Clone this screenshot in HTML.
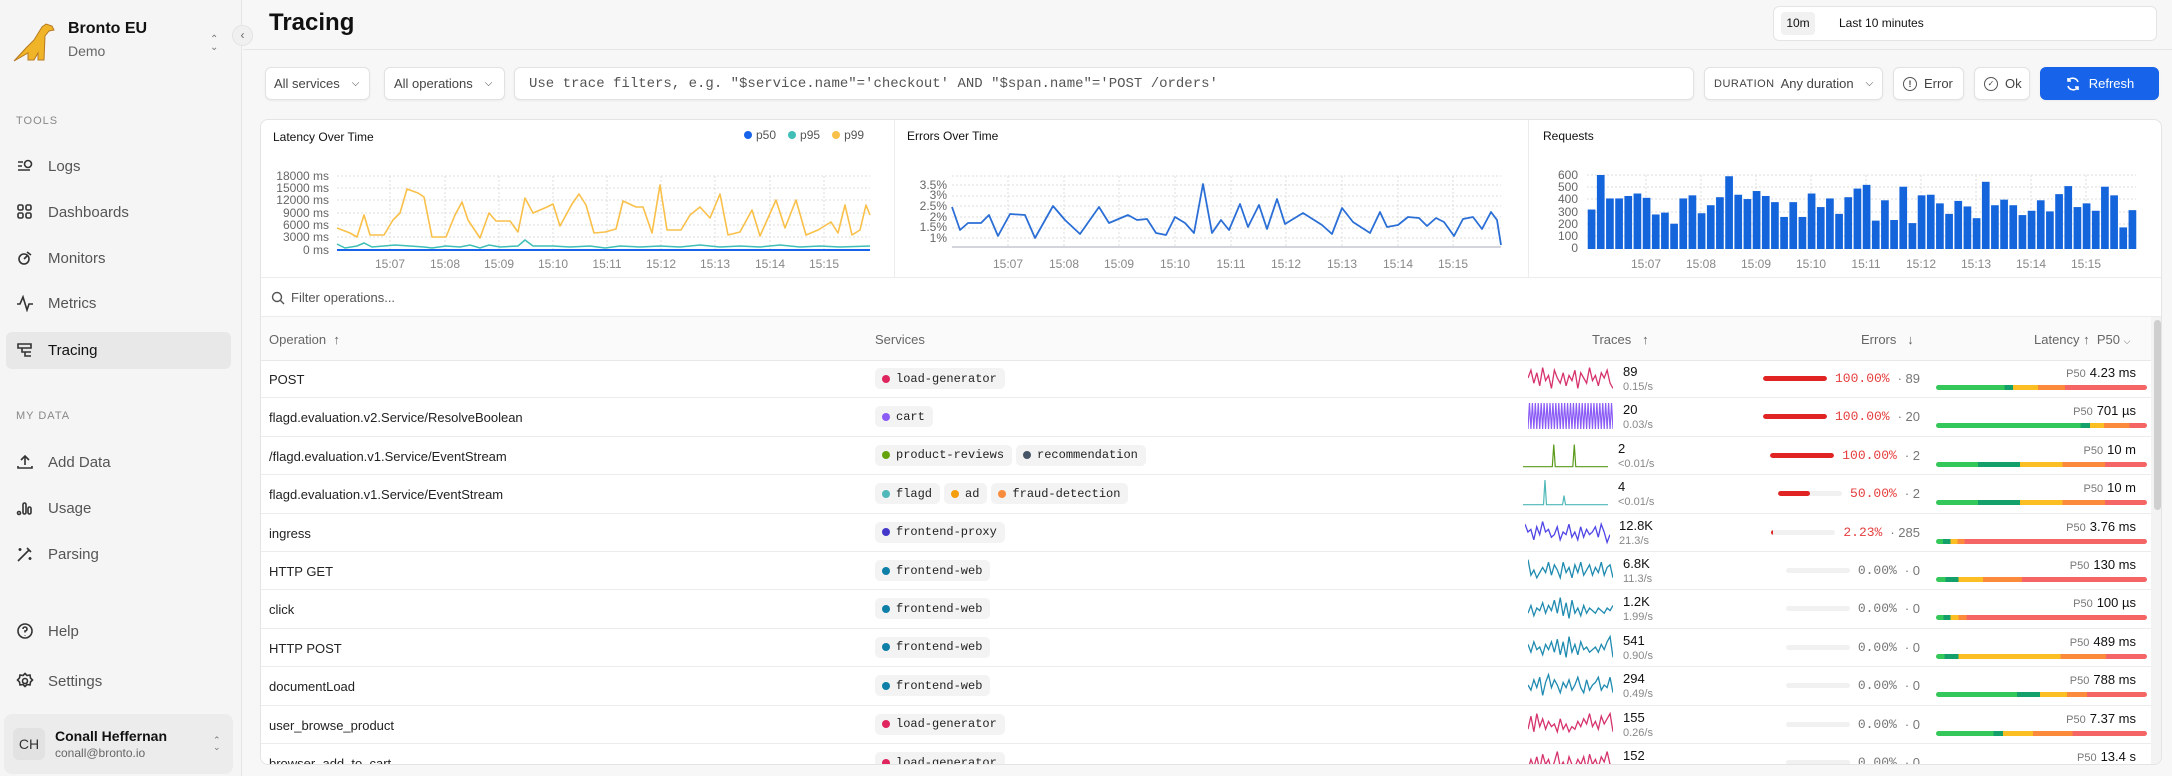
<!DOCTYPE html>
<html><head><meta charset="utf-8"><style>
*{box-sizing:border-box;margin:0;padding:0}
body{width:2172px;height:776px;overflow:hidden;background:#f7f7f7;font-family:"Liberation Sans",Arial,sans-serif;color:#1a1a1a;position:relative}
.a{position:absolute}
.side{left:0;top:0;width:242px;height:776px;background:#f5f5f5;border-right:1px solid #e6e6e6}
.nav{left:16px;font-size:15px;color:#555;display:flex;align-items:center;gap:14px}
.nav svg{width:18px;height:18px;stroke:#333;fill:none;stroke-width:1.6}
.sec{left:16px;font-size:11px;letter-spacing:1px;color:#888}
.btn{background:#fff;border:1px solid #e2e2e2;border-radius:6px;box-shadow:0 1px 2px rgba(0,0,0,.05);font-size:13px;color:#444;display:flex;align-items:center;height:33px;top:67px}
.mono{font-family:"Liberation Mono",monospace}
.card{left:260px;top:119px;width:1902px;height:646px;background:#fff;border:1px solid #e4e4e4;border-radius:8px;overflow:hidden}
.ct{font-size:12px;color:#111}
.th{font-size:13px;color:#666}
.row{left:0;width:1890px;height:38.4px;border-bottom:1px solid #ececec}
.op{left:8px;top:12px;font-size:13px;color:#222}
.chips{left:614px;top:8px;display:flex;gap:4px}
.chip{background:#f3f3f3;border-radius:5px;height:21px;padding:0 8px 0 7px;display:flex;align-items:center;gap:6px;font-family:"Liberation Mono",monospace;font-size:12px;color:#222}
.chip i{width:8px;height:8px;border-radius:50%;display:inline-block}
.sp{left:1267px;top:5px;width:85px;height:26px}
.cnt{left:1362px;top:4px;font-size:13px;color:#111}
.rate{left:1362px;top:21px;font-size:11px;color:#888}
.err{right:231px;top:11px;display:flex;align-items:center;gap:8px;font-size:13px;color:#777}
.trk{width:64px;height:5px;border-radius:3px;background:#f1f1f1;position:relative;overflow:hidden}
.trk b{position:absolute;right:0;top:0;bottom:0;background:#e02424;border-radius:3px}
.pct{font-family:"Liberation Mono",monospace}
.lat{right:15px;top:5px;font-size:13px;color:#111}
.lat small{font-size:11px;color:#777;margin-right:4px}
.lb{left:1675px;top:25px;width:211px;height:5px;border-radius:3px}
</style></head><body>
<div class="a side"></div>
<svg class="a" style="left:12px;top:22px" width="48" height="40" viewBox="0 0 48 40"><path d="M2 39 L14 26 L22 18 L30 5 L34 2 L40 4 L42 8 L37 9 L33 14 L32 38 L26 38 L26 31 L22 38 L16 38 L16 31 Z" fill="#f0b429" stroke="#b7791f" stroke-width="1"/></svg>
<div class="a" style="left:68px;top:20px;font-size:16px;font-weight:bold;color:#111">Bronto EU</div>
<div class="a" style="left:68px;top:43px;font-size:14px;color:#666">Demo</div>
<div class="a" style="left:210px;top:36px;font-size:10px;color:#777;line-height:8px">⌃<br>⌄</div>
<div class="a" style="left:232px;top:25px;width:21px;height:21px;border-radius:50%;background:#f0f0f0;border:1px solid #e3e3e3;font-size:12px;color:#666;text-align:center;line-height:19px">‹</div>
<div class="a sec" style="top:115px">TOOLS</div>
<div class="a nav" style="top:157px"><svg viewBox="0 0 18 18"><path d="M2 5h5M2 9h4M2 13h12"/><circle cx="12" cy="7" r="3.5"/></svg>Logs</div>
<div class="a nav" style="top:203px"><svg viewBox="0 0 18 18"><rect x="2" y="2" width="5" height="5" rx="1.5"/><rect x="10" y="2" width="5" height="5" rx="1.5"/><rect x="2" y="10" width="5" height="5" rx="1.5"/><rect x="10" y="10" width="5" height="5" rx="1.5"/></svg>Dashboards</div>
<div class="a nav" style="top:249px"><svg viewBox="0 0 18 18"><circle cx="8" cy="10" r="5"/><path d="M11 3l4 3M8 10l3-3"/></svg>Monitors</div>
<div class="a nav" style="top:294px"><svg viewBox="0 0 18 18"><path d="M1 10h3l3-7 4 13 2-6h4"/></svg>Metrics</div>
<div class="a" style="left:6px;top:332px;width:225px;height:37px;background:#e8e8e8;border-radius:6px"></div>
<div class="a nav" style="top:341px;color:#111"><svg viewBox="0 0 18 18"><path d="M2 3h13v4H2zM6 7v4h9M9 11v4h6"/></svg>Tracing</div>
<div class="a sec" style="top:410px">MY DATA</div>
<div class="a nav" style="top:453px"><svg viewBox="0 0 18 18"><path d="M9 12V3M5 7l4-4 4 4M2 13v2h14v-2"/></svg>Add Data</div>
<div class="a nav" style="top:499px"><svg viewBox="0 0 18 18"><circle cx="3" cy="14" r="1.5"/><rect x="7" y="4" width="3" height="11" rx="1.5"/><rect x="12" y="8" width="3" height="7" rx="1.5"/></svg>Usage</div>
<div class="a nav" style="top:545px"><svg viewBox="0 0 18 18"><path d="M2 16L13 5M11 3l4 4M4 3v3M2.5 4.5h3M14 12v3M12.5 13.5h3"/></svg>Parsing</div>
<div class="a nav" style="top:622px"><svg viewBox="0 0 18 18"><circle cx="9" cy="9" r="7"/><path d="M7 7a2 2 0 1 1 2 2v1.5M9 13v.5"/></svg>Help</div>
<div class="a nav" style="top:672px"><svg viewBox="0 0 18 18"><circle cx="9" cy="9" r="2.5"/><path d="M9 1.5l2 2 3-.5.5 3 2 2-2 2-.5 3-3-.5-2 2-2-2-3 .5-.5-3-2-2 2-2 .5-3 3 .5z"/></svg>Settings</div>
<div class="a" style="left:4px;top:714px;width:229px;height:60px;background:#ececec;border-radius:8px"></div>
<div class="a" style="left:13px;top:728px;width:32px;height:32px;border-radius:6px;background:#e2e2e2;font-size:14px;color:#333;text-align:center;line-height:32px">CH</div>
<div class="a" style="left:55px;top:728px;font-size:14px;font-weight:bold;color:#111">Conall Heffernan</div>
<div class="a" style="left:55px;top:746px;font-size:12px;color:#666">conall@bronto.io</div>
<div class="a" style="left:213px;top:737px;font-size:9px;color:#777;line-height:7px">⌃<br>⌄</div>

<div class="a" style="left:269px;top:9px;font-size:24px;font-weight:bold;color:#111">Tracing</div>
<div class="a" style="left:243px;top:49px;width:1929px;height:1px;background:#e6e6e6"></div>
<div class="a" style="left:1773px;top:6px;width:384px;height:35px;background:#fff;border:1px solid #e4e4e4;border-radius:6px"></div>
<div class="a" style="left:1781px;top:12px;width:34px;height:23px;background:#f1f1f1;border-radius:4px;font-size:12px;text-align:center;line-height:23px;color:#111">10m</div>
<div class="a" style="left:1839px;top:16px;font-size:12px;color:#111">Last 10 minutes</div>

<div class="a btn" style="left:265px;width:105px;padding-left:8px">All services <span style="margin-left:12px;font-size:10px">⌵</span></div>
<div class="a btn" style="left:384px;width:121px;padding-left:9px">All operations <span style="margin-left:12px;font-size:10px">⌵</span></div>
<div class="a btn mono" style="left:514px;width:1180px;padding-left:14px;font-size:14px;color:#555">Use trace filters, e.g. "$service.name"='checkout' AND "$span.name"='POST /orders'</div>
<div class="a btn" style="left:1704px;width:179px;padding-left:9px"><span style="font-size:11px;letter-spacing:.5px;color:#444;margin-right:6px">DURATION</span>Any duration<span style="margin-left:12px;font-size:10px">⌵</span></div>
<div class="a btn" style="left:1893px;width:71px;padding-left:9px"><span style="display:inline-block;width:14px;height:14px;border:1.4px solid #555;border-radius:50%;font-size:9px;text-align:center;line-height:12px;margin-right:7px;font-weight:bold">!</span>Error</div>
<div class="a btn" style="left:1974px;width:56px;padding-left:9px"><span style="display:inline-block;width:14px;height:14px;border:1.4px solid #555;border-radius:50%;font-size:8px;text-align:center;line-height:12px;margin-right:7px">✓</span>Ok</div>
<div class="a btn" style="left:2040px;width:119px;background:#1763ea;border-color:#1763ea;color:#fff;justify-content:center;gap:8px;font-size:13px"><svg width="16" height="16" viewBox="0 0 16 16" fill="none" stroke="#fff" stroke-width="1.6"><path d="M13 6A5.5 5.5 0 0 0 3 5M3 2v3h3M3 10a5.5 5.5 0 0 0 10 1M13 14v-3h-3"/></svg>Refresh</div>

<div class="a card">
 <div class="a" style="left:633px;top:0;width:1px;height:158px;background:#ececec"></div>
 <div class="a" style="left:1267px;top:0;width:1px;height:158px;background:#ececec"></div>
 <div class="a" style="left:0;top:157px;width:1902px;height:1px;background:#ececec"></div>
 <div class="a ct" style="left:12px;top:10px">Latency Over Time</div>
 <div class="a ct" style="left:646px;top:9px">Errors Over Time</div>
 <div class="a ct" style="left:1282px;top:9px">Requests</div>
 <div class="a" style="left:483px;top:8px;font-size:12px;color:#555;display:flex;gap:12px;align-items:center">
  <span><i style="display:inline-block;width:8px;height:8px;border-radius:50%;background:#1763ea;margin-right:4px"></i>p50</span>
  <span><i style="display:inline-block;width:8px;height:8px;border-radius:50%;background:#3fbfb5;margin-right:4px"></i>p95</span>
  <span><i style="display:inline-block;width:8px;height:8px;border-radius:50%;background:#f9c04a;margin-right:4px"></i>p99</span>
 </div>
 <div class="a" style="left:0;top:158px;width:1902px;height:39px;border-bottom:1px solid #ececec"></div>
 <svg class="a" style="left:10px;top:171px" width="14" height="14" viewBox="0 0 14 14" fill="none" stroke="#555" stroke-width="1.4"><circle cx="6" cy="6" r="4.5"/><path d="M9.5 9.5l3.5 3.5"/></svg>
 <div class="a" style="left:30px;top:170px;font-size:13px;color:#555">Filter operations...</div>
 <div class="a" style="left:0;top:197px;width:1890px;height:44px;background:#fafafa;border-bottom:1px solid #e8e8e8"></div>
 <div class="a th" style="left:8px;top:212px">Operation&nbsp;&nbsp;↑</div>
 <div class="a th" style="left:614px;top:212px">Services</div>
 <div class="a th" style="left:1331px;top:212px">Traces&nbsp;&nbsp;&nbsp;↑</div>
 <div class="a th" style="left:1600px;top:212px">Errors&nbsp;&nbsp;&nbsp;↓</div>
 <div class="a th" style="left:1773px;top:212px">Latency&nbsp;↑&nbsp;&nbsp;P50 <span style="font-size:9px">⌵</span></div>
 <div class="a" style="left:1890px;top:197px;width:12px;height:449px;background:#f3f3f3"></div>
 <div class="a" style="left:1893px;top:200px;width:7px;height:190px;background:#cfcfcf;border-radius:4px"></div>
</div>

<svg class="a" style="left:0;top:0" width="2172" height="300">
 <g stroke="#ddd" stroke-dasharray="2 2" stroke-width="1">
  <path d="M337 176H870M337 188H870M337 200H870M337 213H870M337 225H870M337 237H870"/>
  <path d="M390 176V250M445 176V250M499 176V250M553 176V250M607 176V250M661 176V250M715 176V250M770 176V250M824 176V250"/>
  <path d="M952 176H1501M952 185H1501M952 196H1501M952 206H1501M952 217H1501M952 228H1501M952 238H1501"/>
  <path d="M1008 176V247M1064 176V247M1119 176V247M1175 176V247M1231 176V247M1286 176V247M1342 176V247M1398 176V247M1453 176V247"/>
  <path d="M1587 175H2136M1587 187H2136M1587 199H2136M1587 212H2136M1587 224H2136M1587 236H2136"/>
  <path d="M1646 175V248M1701 175V248M1756 175V248M1811 175V248M1866 175V248M1921 175V248M1976 175V248M2031 175V248M2086 175V248"/>
 </g>
 <g font-family="Liberation Sans,Arial,sans-serif" font-size="12" fill="#666" text-anchor="end">
  <text x="329" y="180">18000 ms</text><text x="329" y="192">15000 ms</text><text x="329" y="204">12000 ms</text><text x="329" y="217">9000 ms</text><text x="329" y="229">6000 ms</text><text x="329" y="241">3000 ms</text><text x="329" y="254">0 ms</text>
  <text x="947" y="189">3.5%</text><text x="947" y="199">3%</text><text x="947" y="210">2.5%</text><text x="947" y="221">2%</text><text x="947" y="231">1.5%</text><text x="947" y="242">1%</text>
  <text x="1578" y="179">600</text><text x="1578" y="191">500</text><text x="1578" y="203">400</text><text x="1578" y="216">300</text><text x="1578" y="228">200</text><text x="1578" y="240">100</text><text x="1578" y="252">0</text>
 </g>
 <g font-family="Liberation Sans,Arial,sans-serif" font-size="12" fill="#888" text-anchor="middle">
  <text x="390" y="268">15:07</text><text x="445" y="268">15:08</text><text x="499" y="268">15:09</text><text x="553" y="268">15:10</text><text x="607" y="268">15:11</text><text x="661" y="268">15:12</text><text x="715" y="268">15:13</text><text x="770" y="268">15:14</text><text x="824" y="268">15:15</text>
  <text x="1008" y="268">15:07</text><text x="1064" y="268">15:08</text><text x="1119" y="268">15:09</text><text x="1175" y="268">15:10</text><text x="1231" y="268">15:11</text><text x="1286" y="268">15:12</text><text x="1342" y="268">15:13</text><text x="1398" y="268">15:14</text><text x="1453" y="268">15:15</text>
  <text x="1646" y="268">15:07</text><text x="1701" y="268">15:08</text><text x="1756" y="268">15:09</text><text x="1811" y="268">15:10</text><text x="1866" y="268">15:11</text><text x="1921" y="268">15:12</text><text x="1976" y="268">15:13</text><text x="2031" y="268">15:14</text><text x="2086" y="268">15:15</text>
 </g>
 <path d="M337 250H870" stroke="#1763ea" stroke-width="2"/>
 <polyline fill="none" stroke="#3fbfb5" stroke-width="1.5" points="337,244 345,248 357,246 364,243 372,247 384,246 395,245 410,246 424,247 432,248 446,246 460,247 470,245 480,248 489,245 500,247 518,246 525,240 533,246 553,246 570,247 590,246 605,248 620,246 640,247 660,246 680,247 700,245 720,247 740,246 760,247 780,245 800,247 820,246 840,247 870,246"/>
 <polyline fill="none" stroke="#f9c04a" stroke-width="1.6" stroke-linejoin="round" points="337,228 350,233 357,237 364,215 370,235 384,235 393,220 400,213 407,189 418,193 424,197 432,237 446,237 455,215 462,202 468,220 480,238 489,213 496,221 510,221 518,232 525,198 533,213 547,207 553,204 560,226 572,204 579,194 586,205 594,233 605,232 616,229 623,201 636,207 643,207 652,233 660,185 667,230 681,230 690,215 700,207 710,218 720,194 728,235 740,232 752,210 760,236 776,200 785,228 796,200 806,235 818,230 831,222 838,233 845,205 852,235 860,230 866,205 870,215"/>
 <path d="M952 247H1501" stroke="#aab" stroke-width="1"/>
 <polyline fill="none" stroke="#2b6fd6" stroke-width="1.8" stroke-linejoin="round" points="952,207 960,230 968,223 981,223 989,215 998,236 1010,214 1025,215 1035,238 1053,206 1065,220 1080,234 1099,207 1109,223 1128,215 1137,220 1147,219 1156,233 1166,235 1175,217 1185,223 1194,233 1203,184 1212,233 1221,220 1229,230 1240,204 1248,227 1259,205 1267,229 1277,199 1285,224 1303,213 1322,225 1332,234 1342,208 1353,222 1370,233 1380,212 1387,227 1398,225 1408,217 1419,218 1427,226 1436,218 1444,222 1454,236 1463,219 1473,217 1482,229 1491,212 1497,220 1501,245"/>
</svg>
<svg class="a" style="left:1587px;top:175px" width="550" height="74" viewBox="0 0 60 600" preserveAspectRatio="none">
 <g fill="#1464dc">
 <rect x="0.08" y="280" width="0.84" height="320"/><rect x="1.08" y="0" width="0.84" height="600"/><rect x="2.08" y="190" width="0.84" height="410"/><rect x="3.08" y="190" width="0.84" height="410"/><rect x="4.08" y="170" width="0.84" height="430"/><rect x="5.08" y="150" width="0.84" height="450"/><rect x="6.08" y="185" width="0.84" height="415"/><rect x="7.08" y="320" width="0.84" height="280"/><rect x="8.08" y="305" width="0.84" height="295"/><rect x="9.08" y="395" width="0.84" height="205"/>
 <rect x="10.08" y="190" width="0.84" height="410"/><rect x="11.08" y="165" width="0.84" height="435"/><rect x="12.08" y="310" width="0.84" height="290"/><rect x="13.08" y="245" width="0.84" height="355"/><rect x="14.08" y="180" width="0.84" height="420"/><rect x="15.08" y="10" width="0.84" height="590"/><rect x="16.08" y="160" width="0.84" height="440"/><rect x="17.08" y="195" width="0.84" height="405"/><rect x="18.08" y="130" width="0.84" height="470"/><rect x="19.08" y="170" width="0.84" height="430"/>
 <rect x="20.08" y="220" width="0.84" height="380"/><rect x="21.08" y="340" width="0.84" height="260"/><rect x="22.08" y="220" width="0.84" height="380"/><rect x="23.08" y="340" width="0.84" height="260"/><rect x="24.08" y="150" width="0.84" height="450"/><rect x="25.08" y="260" width="0.84" height="340"/><rect x="26.08" y="190" width="0.84" height="410"/><rect x="27.08" y="315" width="0.84" height="285"/><rect x="28.08" y="180" width="0.84" height="420"/><rect x="29.08" y="110" width="0.84" height="490"/>
 <rect x="30.08" y="80" width="0.84" height="520"/><rect x="31.08" y="370" width="0.84" height="230"/><rect x="32.08" y="205" width="0.84" height="395"/><rect x="33.08" y="365" width="0.84" height="235"/><rect x="34.08" y="95" width="0.84" height="505"/><rect x="35.08" y="390" width="0.84" height="210"/><rect x="36.08" y="165" width="0.84" height="435"/><rect x="37.08" y="160" width="0.84" height="440"/><rect x="38.08" y="230" width="0.84" height="370"/><rect x="39.08" y="315" width="0.84" height="285"/>
 <rect x="40.08" y="210" width="0.84" height="390"/><rect x="41.08" y="255" width="0.84" height="345"/><rect x="42.08" y="350" width="0.84" height="250"/><rect x="43.08" y="55" width="0.84" height="545"/><rect x="44.08" y="245" width="0.84" height="355"/><rect x="45.08" y="200" width="0.84" height="400"/><rect x="46.08" y="245" width="0.84" height="355"/><rect x="47.08" y="325" width="0.84" height="275"/><rect x="48.08" y="290" width="0.84" height="310"/><rect x="49.08" y="205" width="0.84" height="395"/>
 <rect x="50.08" y="295" width="0.84" height="305"/><rect x="51.08" y="155" width="0.84" height="445"/><rect x="52.08" y="90" width="0.84" height="510"/><rect x="53.08" y="260" width="0.84" height="340"/><rect x="54.08" y="230" width="0.84" height="370"/><rect x="55.08" y="290" width="0.84" height="310"/><rect x="56.08" y="95" width="0.84" height="505"/><rect x="57.08" y="165" width="0.84" height="435"/><rect x="58.08" y="425" width="0.84" height="175"/><rect x="59.08" y="285" width="0.84" height="315"/>
 </g>
</svg>

<div class="a" style="left:261px;top:360px;width:1890px;height:404px;overflow:hidden">
<div class="a row" style="top:0"><div class="a op">POST</div><div class="a chips"><span class="chip"><i style="background:#e0245e"></i>load-generator</span></div>
<svg class="a sp" viewBox="0 0 29 10" preserveAspectRatio="none"><polyline fill="none" stroke="#d6336c" stroke-width="1.3" vector-effect="non-scaling-stroke" points="0,5 1,2 2,7 3,3 4,8 5,1 6,6 7,4 8,9 9,2 10,5 11,7 12,3 13,8 14,4 15,6 16,2 17,9 18,3 19,5 20,7 21,1 22,6 23,4 24,8 25,3 26,5 27,2 28,7 29,9"/></svg>
<div class="a cnt">89</div><div class="a rate">0.15/s</div>
<div class="a err"><div class="trk"><b style="width:100%"></b></div><span class="pct" style="color:#e53e3e">100.00%</span><span>· 89</span></div>
<div class="a lat"><small>P50</small>4.23 ms</div>
<div class="a lb" style="background:linear-gradient(90deg,#34c759 0 32.5%,#14a06a 32.5% 36.5%,#fbbf24 36.5% 48.4%,#fb8a3c 48.4% 61.2%,#f56565 61.2%)"></div></div>

<div class="a row" style="top:38.4px"><div class="a op">flagd.evaluation.v2.Service/ResolveBoolean</div><div class="a chips"><span class="chip"><i style="background:#8b5cf6"></i>cart</span></div>
<svg class="a sp" viewBox="0 0 29 10" preserveAspectRatio="none"><polyline fill="none" stroke="#8b5cf6" stroke-width="1.2" vector-effect="non-scaling-stroke" points="0,10 0.5,0 1,10 1.5,0 2,10 2.5,0 3,10 3.5,0 4,10 4.5,0 5,10 5.5,0 6,10 6.5,0 7,10 7.5,0 8,10 8.5,0 9,10 9.5,0 10,10 10.5,0 11,10 11.5,0 12,10 12.5,0 13,10 13.5,0 14,10 14.5,0 15,10 15.5,0 16,10 16.5,0 17,10 17.5,0 18,10 18.5,0 19,10 19.5,0 20,10 20.5,0 21,10 21.5,0 22,10 22.5,0 23,10 23.5,0 24,10 24.5,0 25,10 25.5,0 26,10 26.5,0 27,10 27.5,0 28,10 28.5,0 29,10"/></svg>
<div class="a cnt">20</div><div class="a rate">0.03/s</div>
<div class="a err"><div class="trk"><b style="width:100%"></b></div><span class="pct" style="color:#e53e3e">100.00%</span><span>· 20</span></div>
<div class="a lat"><small>P50</small>701 µs</div>
<div class="a lb" style="background:linear-gradient(90deg,#34c759 0 68.5%,#14a06a 68.5% 73.1%,#fbbf24 73.1% 79.7%,#fb8a3c 79.7% 91.8%,#f56565 91.8%)"></div></div>

<div class="a row" style="top:76.8px"><div class="a op">/flagd.evaluation.v1.Service/EventStream</div><div class="a chips"><span class="chip"><i style="background:#65a30d"></i>product-reviews</span><span class="chip"><i style="background:#475569"></i>recommendation</span></div>
<svg class="a sp" style="left:1262px" viewBox="0 0 29 10" preserveAspectRatio="none"><polyline fill="none" stroke="#5a9a1a" stroke-width="1.2" vector-effect="non-scaling-stroke" points="0,9.5 10,9.5 10.5,1 11,9.5 17,9.5 17.5,1 18,9.5 29,9.5"/></svg>
<div class="a cnt" style="left:1357px">2</div><div class="a rate" style="left:1357px">&lt;0.01/s</div>
<div class="a err"><div class="trk"><b style="width:100%"></b></div><span class="pct" style="color:#e53e3e">100.00%</span><span>· 2</span></div>
<div class="a lat"><small>P50</small>10 m</div>
<div class="a lb" style="background:linear-gradient(90deg,#34c759 0 19.9%,#14a06a 19.9% 39.7%,#fbbf24 39.7% 60%,#fb8a3c 60% 80.1%,#f56565 80.1%)"></div></div>

<div class="a row" style="top:115.2px"><div class="a op">flagd.evaluation.v1.Service/EventStream</div><div class="a chips"><span class="chip"><i style="background:#4fb8b8"></i>flagd</span><span class="chip"><i style="background:#f59e0b"></i>ad</span><span class="chip"><i style="background:#fb8c3c"></i>fraud-detection</span></div>
<svg class="a sp" style="left:1262px" viewBox="0 0 29 10" preserveAspectRatio="none"><polyline fill="none" stroke="#4fb8b8" stroke-width="1.2" vector-effect="non-scaling-stroke" points="0,9.5 7,9.5 7.5,0 8,9.5 13.5,9.5 14,6 14.5,9.5 29,9.5"/></svg>
<div class="a cnt" style="left:1357px">4</div><div class="a rate" style="left:1357px">&lt;0.01/s</div>
<div class="a err"><div class="trk"><b style="width:50%;left:0;right:auto"></b></div><span class="pct" style="color:#e53e3e">50.00%</span><span>· 2</span></div>
<div class="a lat"><small>P50</small>10 m</div>
<div class="a lb" style="background:linear-gradient(90deg,#34c759 0 19.9%,#14a06a 19.9% 39.7%,#fbbf24 39.7% 60%,#fb8a3c 60% 80.1%,#f56565 80.1%)"></div></div>

<div class="a row" style="top:153.6px"><div class="a op">ingress</div><div class="a chips"><span class="chip"><i style="background:#4338ca"></i>frontend-proxy</span></div>
<svg class="a sp" style="left:1264px" viewBox="0 0 29 10" preserveAspectRatio="none"><polyline fill="none" stroke="#4f46e5" stroke-width="1.3" vector-effect="non-scaling-stroke" points="0,2 1,5 2,4 3,8 4,3 5,6 6,1 7,5 8,4 9,7 10,6 11,3 12,8 13,5 14,6 15,2 16,7 17,5 18,8 19,3 20,7 21,4 22,6 23,5 24,3 25,7 26,2 27,5 28,9 29,6"/></svg>
<div class="a cnt" style="left:1358px">12.8K</div><div class="a rate" style="left:1358px">21.3/s</div>
<div class="a err"><div class="trk"><b style="width:2%;left:0;right:auto"></b></div><span class="pct" style="color:#e53e3e">2.23%</span><span>· 285</span></div>
<div class="a lat"><small>P50</small>3.76 ms</div>
<div class="a lb" style="background:linear-gradient(90deg,#34c759 0 3.3%,#14a06a 3.3% 6.8%,#fbbf24 6.8% 10.3%,#fb8a3c 10.3% 13.6%,#f56565 13.6%)"></div></div>

<div class="a row" style="top:192px"><div class="a op">HTTP GET</div><div class="a chips"><span class="chip"><i style="background:#0e7fa6"></i>frontend-web</span></div>
<svg class="a sp" viewBox="0 0 29 10" preserveAspectRatio="none"><polyline fill="none" stroke="#1f8bb0" stroke-width="1.3" vector-effect="non-scaling-stroke" points="0,1 1,7 2,5 3,8 4,6 5,4 6,6 7,2 8,7 9,3 10,5 11,8 12,2 13,6 14,4 15,8 16,3 17,6 18,2 19,7 20,5 21,3 22,7 23,4 24,6 25,2 26,7 27,4 28,3 29,8"/></svg>
<div class="a cnt">6.8K</div><div class="a rate">11.3/s</div>
<div class="a err"><div class="trk"></div><span class="pct">0.00%</span><span>· 0</span></div>
<div class="a lat"><small>P50</small>130 ms</div>
<div class="a lb" style="background:linear-gradient(90deg,#34c759 0 4.4%,#14a06a 4.4% 10.7%,#fbbf24 10.7% 22.2%,#fb8a3c 22.2% 40.7%,#f56565 40.7%)"></div></div>

<div class="a row" style="top:230.4px"><div class="a op">click</div><div class="a chips"><span class="chip"><i style="background:#0e7fa6"></i>frontend-web</span></div>
<svg class="a sp" viewBox="0 0 29 10" preserveAspectRatio="none"><polyline fill="none" stroke="#1f8bb0" stroke-width="1.3" vector-effect="non-scaling-stroke" points="0,7 1,4 2,8 3,5 4,6 5,3 6,7 7,4 8,6 9,2 10,7 11,1 12,8 13,3 14,9 15,2 16,7 17,5 18,8 19,4 20,7 21,5 22,6 23,7 24,5 25,6 26,7 27,5 28,6 29,4"/></svg>
<div class="a cnt">1.2K</div><div class="a rate">1.99/s</div>
<div class="a err"><div class="trk"></div><span class="pct">0.00%</span><span>· 0</span></div>
<div class="a lat"><small>P50</small>100 µs</div>
<div class="a lb" style="background:linear-gradient(90deg,#34c759 0 3.5%,#14a06a 3.5% 6.8%,#fbbf24 6.8% 10.7%,#fb8a3c 10.7% 14.5%,#f56565 14.5%)"></div></div>

<div class="a row" style="top:268.8px"><div class="a op">HTTP POST</div><div class="a chips"><span class="chip"><i style="background:#0e7fa6"></i>frontend-web</span></div>
<svg class="a sp" viewBox="0 0 29 10" preserveAspectRatio="none"><polyline fill="none" stroke="#1f8bb0" stroke-width="1.3" vector-effect="non-scaling-stroke" points="0,4 1,7 2,3 3,6 4,5 5,8 6,4 7,6 8,3 9,7 10,2 11,8 12,3 13,9 14,1 15,7 16,4 17,8 18,3 19,6 20,5 21,7 22,6 23,5 24,7 25,4 26,6 27,3 28,1 29,9"/></svg>
<div class="a cnt">541</div><div class="a rate">0.90/s</div>
<div class="a err"><div class="trk"></div><span class="pct">0.00%</span><span>· 0</span></div>
<div class="a lat"><small>P50</small>489 ms</div>
<div class="a lb" style="background:linear-gradient(90deg,#34c759 0 4%,#14a06a 4% 10.7%,#fbbf24 10.7% 58.9%,#fb8a3c 58.9% 80.6%,#f56565 80.6%)"></div></div>

<div class="a row" style="top:307.2px"><div class="a op">documentLoad</div><div class="a chips"><span class="chip"><i style="background:#0e7fa6"></i>frontend-web</span></div>
<svg class="a sp" viewBox="0 0 29 10" preserveAspectRatio="none"><polyline fill="none" stroke="#1f8bb0" stroke-width="1.3" vector-effect="non-scaling-stroke" points="0,5 1,7 2,3 3,6 4,2 5,9 6,4 7,1 8,6 9,3 10,5 11,8 12,4 13,6 14,3 15,7 16,5 17,2 18,6 19,8 20,3 21,7 22,5 23,4 24,2 25,7 26,5 27,6 28,2 29,8"/></svg>
<div class="a cnt">294</div><div class="a rate">0.49/s</div>
<div class="a err"><div class="trk"></div><span class="pct">0.00%</span><span>· 0</span></div>
<div class="a lat"><small>P50</small>788 ms</div>
<div class="a lb" style="background:linear-gradient(90deg,#34c759 0 38.3%,#14a06a 38.3% 49.3%,#fbbf24 49.3% 62.1%,#fb8a3c 62.1% 71.5%,#f56565 71.5%)"></div></div>

<div class="a row" style="top:345.6px"><div class="a op">user_browse_product</div><div class="a chips"><span class="chip"><i style="background:#e0245e"></i>load-generator</span></div>
<svg class="a sp" viewBox="0 0 29 10" preserveAspectRatio="none"><polyline fill="none" stroke="#d6336c" stroke-width="1.3" vector-effect="non-scaling-stroke" points="0,7 1,2 2,8 3,1 4,6 5,3 6,7 7,4 8,6 9,5 10,8 11,3 12,7 13,5 14,8 15,6 16,7 17,4 18,6 19,3 20,5 21,1 22,6 23,4 24,7 25,2 26,5 27,3 28,1 29,8"/></svg>
<div class="a cnt">155</div><div class="a rate">0.26/s</div>
<div class="a err"><div class="trk"></div><span class="pct">0.00%</span><span>· 0</span></div>
<div class="a lat"><small>P50</small>7.37 ms</div>
<div class="a lb" style="background:linear-gradient(90deg,#34c759 0 27.3%,#14a06a 27.3% 31.8%,#fbbf24 31.8% 46%,#fb8a3c 46% 64.7%,#f56565 64.7%)"></div></div>

<div class="a row" style="top:384px"><div class="a op">browser_add_to_cart</div><div class="a chips"><span class="chip"><i style="background:#e0245e"></i>load-generator</span></div>
<svg class="a sp" viewBox="0 0 29 10" preserveAspectRatio="none"><polyline fill="none" stroke="#d6336c" stroke-width="1.3" vector-effect="non-scaling-stroke" points="0,8 1,4 2,7 3,3 4,8 5,2 6,6 7,4 8,8 9,5 10,1 11,7 12,5 13,8 14,3 15,6 16,7 17,4 18,6 19,3 20,8 21,2 22,6 23,4 24,7 25,3 26,5 27,1 28,6 29,8"/></svg>
<div class="a cnt">152</div><div class="a rate">0.25/s</div>
<div class="a err"><div class="trk"></div><span class="pct">0.00%</span><span>· 0</span></div>
<div class="a lat"><small>P50</small>13.4 s</div></div>
</div>
</body></html>
